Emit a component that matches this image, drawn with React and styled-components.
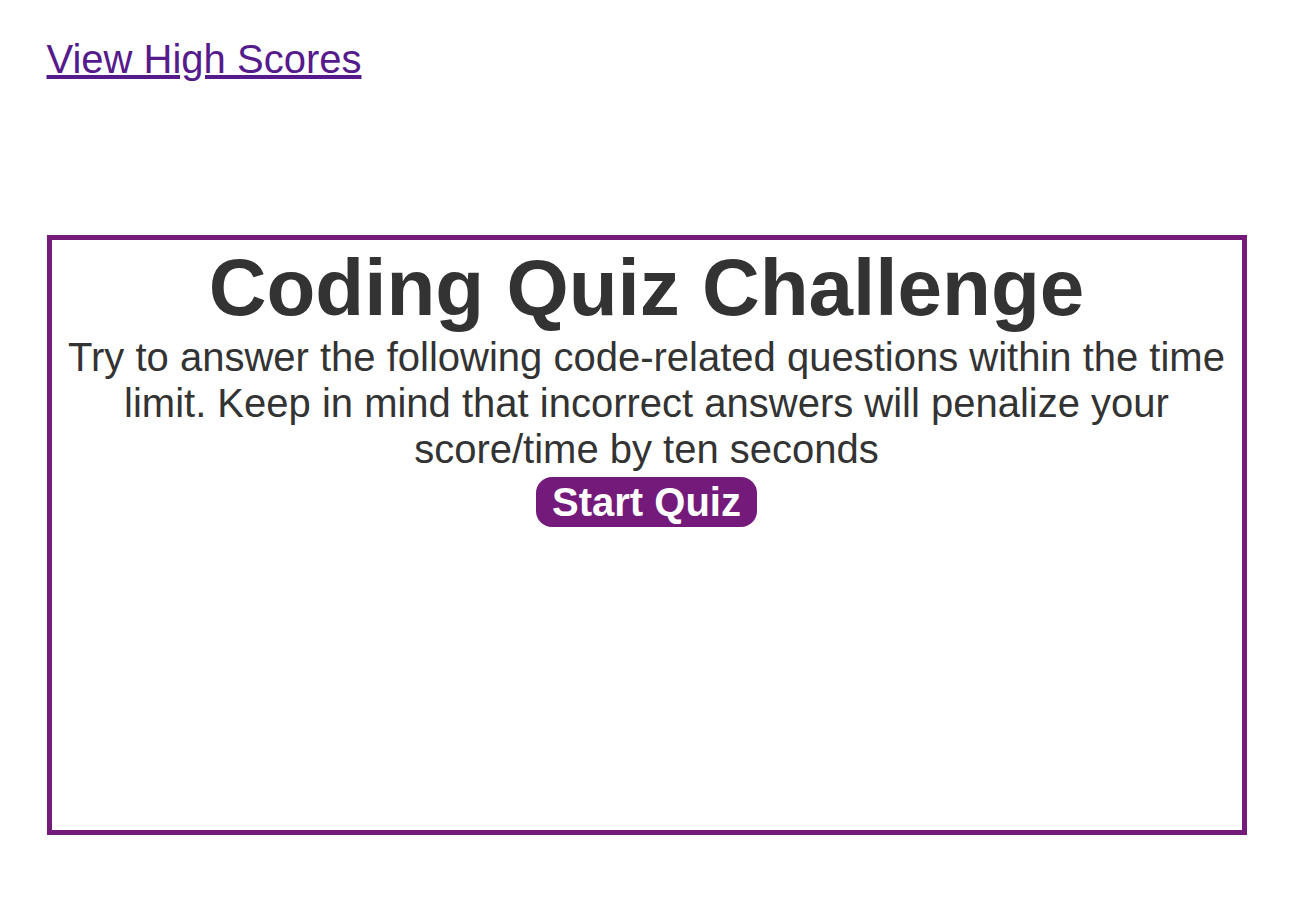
import React from 'react';
import styled, { createGlobalStyle } from 'styled-components';

const GlobalStyle = createGlobalStyle`
  body {
    margin: 0;
    font-family: Arial, "Liberation Sans", Helvetica, sans-serif;
    background: #fff;
    color: #333;
  }
`;

const Page = styled.div`
  width: 1200px;
  margin: 0 auto;
  padding: 37px 1px 0 0;
`;

const Header = styled.header`
  display: flex;
  align-items: center;
`;

const ScoresLink = styled.a`
  font-size: 40px;
  color: #551a8b;
  text-decoration: underline;
  cursor: pointer;
`;

const QuizBox = styled.main`
  box-sizing: border-box;
  height: 600px;
  margin-top: 153px;
  border: 5px solid #741a7a;
  display: flex;
  flex-direction: column;
  align-items: center;
  text-align: center;
`;

const Title = styled.h1`
  margin: 2px 0 0;
  font-size: 80px;
  font-weight: bold;
  color: #333;
`;

const Intro = styled.p`
  margin: 0;
  padding: 0 16px;
  font-size: 40px;
  line-height: 46px;
  color: #333;
`;

const StartButton = styled.button`
  margin-top: 5px;
  padding: 2px 16px;
  border: none;
  border-radius: 16px;
  background: #741a7a;
  color: #fff;
  font-family: inherit;
  font-size: 40px;
  font-weight: bold;
  line-height: 46px;
  cursor: pointer;
`;

const App = () => {
  return (
    <>
      <GlobalStyle />
      <Page>
        <Header>
          <ScoresLink href="#">View High Scores</ScoresLink>
        </Header>
        <QuizBox>
          <Title>Coding Quiz Challenge</Title>
          <Intro>
            Try to answer the following code-related questions within the time
            limit. Keep in mind that incorrect answers will penalize your
            score/time by ten seconds
          </Intro>
          <StartButton>Start Quiz</StartButton>
        </QuizBox>
      </Page>
    </>
  );
};

export default App;
